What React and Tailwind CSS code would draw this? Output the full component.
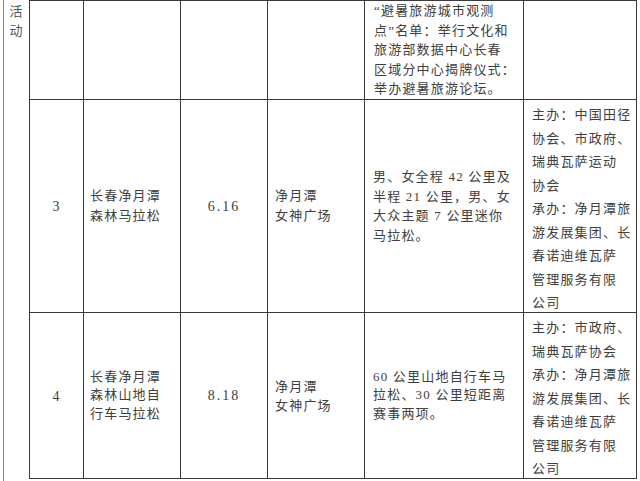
import React from "react";

const cell = "border-r border-b border-[#3a3a3a]";

function Lines({ lines }) {
  return (
    <div>
      {lines.map((l, i) => (
        <div key={i} className="whitespace-nowrap">{l}</div>
      ))}
    </div>
  );
}

export default function App() {
  return (
    <div className="w-[640px] h-[481px] bg-white overflow-hidden flex pl-[3px] text-[#404040] text-[13px] tracking-[1.2px] font-['Liberation_Serif','Noto_Sans_CJK_SC',serif]">
      <div className="w-[26px] shrink-0 border-l border-[#8c8c8c] flex flex-col items-center pt-[2px] leading-[19px] text-[#555]">
        <div>活</div>
        <div>动</div>
      </div>
      <div className="grid grid-cols-[54px_97px_87px_97px_159px_113px] grid-rows-[99px_213px_166px] border-l border-t border-[#3a3a3a] self-start">
        {/* row 1 */}
        <div className={cell}></div>
        <div className={cell}></div>
        <div className={cell}></div>
        <div className={cell}></div>
        <div className={`${cell} pl-[9px] leading-[19.5px]`}>
          <Lines
            lines={[
              "“避暑旅游城市观测",
              "点”名单：举行文化和",
              "旅游部数据中心长春",
              "区域分中心揭牌仪式：",
              "举办避暑旅游论坛。",
            ]}
          />
        </div>
        <div className={cell}></div>

        {/* row 2 */}
        <div className={`${cell} flex items-center justify-center text-[14px]`}>3</div>
        <div className={`${cell} flex items-center pl-[6px] leading-[20px]`}>
          <Lines lines={["长春净月潭", "森林马拉松"]} />
        </div>
        <div className={`${cell} flex items-center justify-center text-[14px] tracking-[2px]`}>6.16</div>
        <div className={`${cell} flex items-center pl-[7px] leading-[20px]`}>
          <Lines lines={["净月潭", "女神广场"]} />
        </div>
        <div className={`${cell} flex items-center pl-[8px] leading-[19.5px]`}>
          <Lines
            lines={[
              "男、女全程 42 公里及",
              "半程 21 公里，男、女",
              "大众主题 7 公里迷你",
              "马拉松。",
            ]}
          />
        </div>
        <div className={`${cell} pl-[8px] pt-[3px] leading-[23.5px]`}>
          <Lines
            lines={[
              "主办：中国田径",
              "协会、市政府、",
              "瑞典瓦萨运动",
              "协会",
              "承办：净月潭旅",
              "游发展集团、长",
              "春诺迪维瓦萨",
              "管理服务有限",
              "公司",
            ]}
          />
        </div>

        {/* row 3 */}
        <div className={`${cell} flex items-center justify-center text-[14px] pt-[2px]`}>4</div>
        <div className={`${cell} flex items-center pl-[6px] leading-[18.5px]`}>
          <Lines lines={["长春净月潭", "森林山地自", "行车马拉松"]} />
        </div>
        <div className={`${cell} flex items-center justify-center text-[14px] tracking-[2px]`}>8.18</div>
        <div className={`${cell} flex items-center pl-[7px] leading-[19px]`}>
          <Lines lines={["净月潭", "女神广场"]} />
        </div>
        <div className={`${cell} flex items-center pl-[8px] leading-[18.5px]`}>
          <Lines
            lines={["60 公里山地自行车马", "拉松、30 公里短距离", "赛事两项。"]}
          />
        </div>
        <div className={`${cell} pl-[8px] pt-[3px] leading-[23.5px]`}>
          <Lines
            lines={[
              "主办：市政府、",
              "瑞典瓦萨协会",
              "承办：净月潭旅",
              "游发展集团、长",
              "春诺迪维瓦萨",
              "管理服务有限",
              "公司",
            ]}
          />
        </div>
      </div>
    </div>
  );
}
